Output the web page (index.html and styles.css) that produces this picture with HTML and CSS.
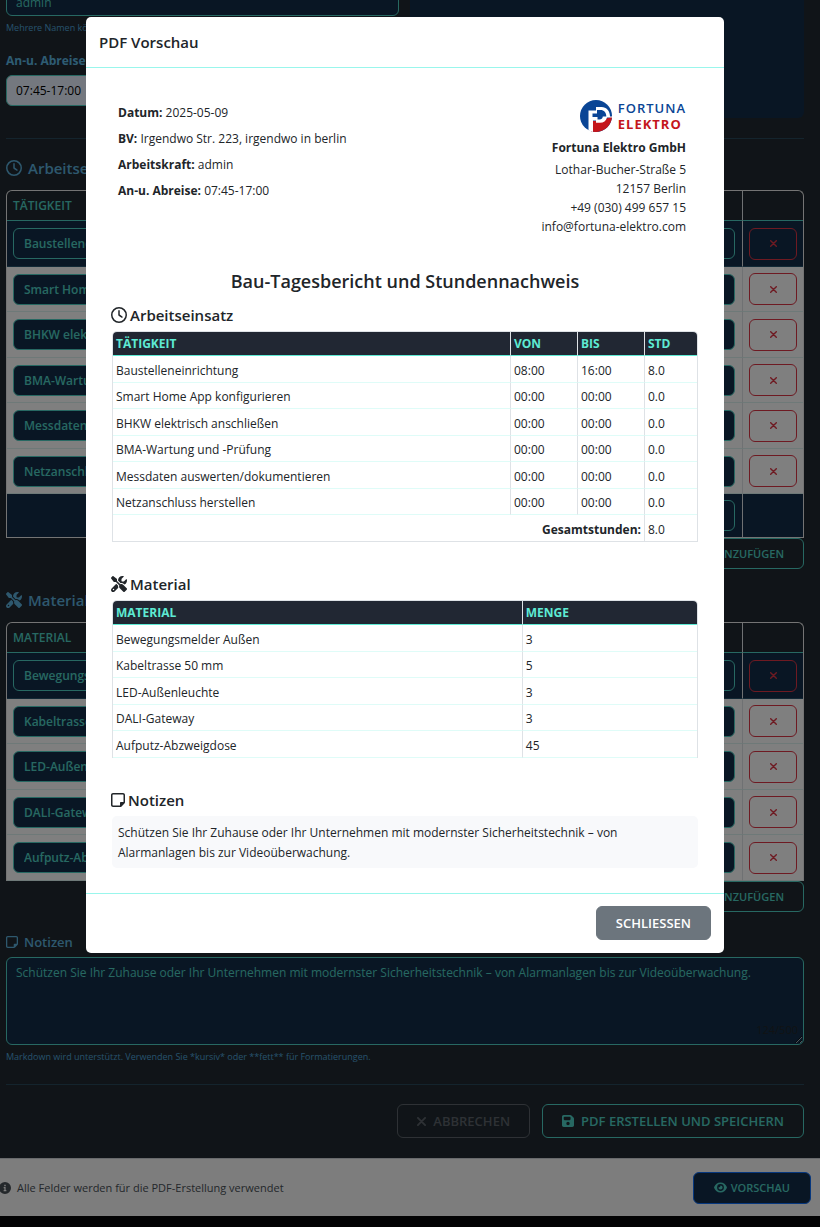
FILE: index.html
```html
<!DOCTYPE html>
<html lang="de">
<head>
<meta charset="utf-8">
<meta name="viewport" content="width=device-width, initial-scale=1">
<title>Bau-Tagesbericht</title>
<link rel="stylesheet" href="styles.css">
</head>
<body>
<svg class="sprite" aria-hidden="true">
  <symbol id="clock" viewBox="0 0 512 512"><path d="M464 256A208 208 0 1 1 48 256a208 208 0 1 1 416 0zM0 256a256 256 0 1 0 512 0A256 256 0 1 0 0 256zM232 120V256c0 8 4 15.5 10.7 20l96 64c11 7.4 25.9 4.4 33.3-6.7s4.4-25.9-6.7-33.3L280 243.2V120c0-13.3-10.7-24-24-24s-24 10.7-24 24z"/></symbol>
  <symbol id="tools" viewBox="0 0 512 512"><path d="M78.6 5C69.1-2.4 55.6-1.5 47 7L7 47c-8.5 8.5-9.4 22-2.1 31.6l80 104c4.5 5.9 11.6 9.4 19 9.4h54.1l109 109c-14.7 29-10 65.4 14.3 89.6l112 112c12.5 12.5 32.8 12.5 45.3 0l64-64c12.5-12.5 12.5-32.8 0-45.3l-112-112c-24.2-24.2-60.6-29-89.6-14.3l-109-109V104c0-7.5-3.5-14.5-9.4-19L78.6 5zM19.9 396.1C7.2 408.8 0 426.1 0 444.1C0 481.6 30.4 512 67.9 512c18 0 35.3-7.2 48-19.9L233.7 374.3c-7.8-20.9-9-43.6-3.6-65.1l-61.7-61.7L19.9 396.1zM512 144c0-10.5-1.1-20.7-3.2-30.5c-2.4-11.2-16.1-14.1-24.2-6l-63.9 63.9c-3 3-7.1 4.7-11.3 4.7H352c-8.8 0-16-7.2-16-16V102.6c0-4.2 1.7-8.3 4.7-11.3l63.9-63.9c8.1-8.1 5.2-21.8-6-24.2C388.7 1.1 378.5 0 368 0C288.5 0 224 64.5 224 144l0 .8 85.3 85.3c36-9.1 75.8 .5 104 28.7L429 274.5c49-23 83-72.8 83-130.5zM56 432a24 24 0 1 1 48 0 24 24 0 1 1 -48 0z"/></symbol>
  <symbol id="note" viewBox="0 32 448 448"><path d="M64 80c-8.8 0-16 7.2-16 16V416c0 8.8 7.2 16 16 16H288V352c0-17.7 14.3-32 32-32h80V96c0-8.8-7.2-16-16-16H64zM288 480H64c-35.3 0-64-28.7-64-64V96C0 60.7 28.7 32 64 32H384c35.3 0 64 28.7 64 64V320v5.5c0 17-6.7 33.3-18.7 45.3l-90.5 90.5c-12 12-28.3 18.7-45.3 18.7H288z"/></symbol>
  <symbol id="save" viewBox="0 32 448 448"><path d="M64 32C28.7 32 0 60.7 0 96V416c0 35.3 28.7 64 64 64H384c35.3 0 64-28.7 64-64V173.3c0-17-6.7-33.3-18.7-45.3L352 50.7C340 38.7 323.7 32 306.7 32H64zm0 96c0-17.7 14.3-32 32-32H288c17.7 0 32 14.3 32 32v64c0 17.7-14.3 32-32 32H96c-17.7 0-32-14.3-32-32V128zM224 288a64 64 0 1 1 0 128 64 64 0 1 1 0-128z"/></symbol>
  <symbol id="cross" viewBox="0 0 10 10"><path d="M1 1l8 8M9 1l-8 8" fill="none" stroke="currentColor" stroke-width="2" stroke-linecap="round"/></symbol>
  <symbol id="eye" viewBox="0 0 26 22"><path fill-rule="evenodd" d="M13 1C7 1 2.500 5 .3 10.200q-.3.800 0 1.600C2.500 17 7 21 13 21s10.500-4 12.700-9.200q.3-.8 0-1.600C23.500 5 19 1 13 1zM13 4.200a6.800 6.800 0 1 1 0 13.600a6.800 6.800 0 1 1 0-13.600zM13 6.800q.4 4-4.200 4.200a4.200 4.200 0 1 0 4.200-4.200z"/></symbol>
  <symbol id="info" viewBox="0 0 16 16"><path fill-rule="evenodd" d="M8 0a8 8 0 1 1 0 16A8 8 0 1 1 8 0zM7 3.500v2h2v-2zM6.200 6.800v1.400h1v2.600h-1v1.400h3.600v-1.400h-1v-4z"/></symbol>
</svg>

<main class="page">
  <form class="report">
    <div class="top">
      <div class="top-fields">
        <textarea class="field staff" aria-label="Arbeitskraft">admin</textarea>
        <p class="hint">Mehrere Namen können durch Komma getrennt werden.</p>
        <label class="field-label" for="travel">An-u. Abreise</label>
        <input class="field field-light" id="travel" value="07:45-17:00">
      </div>
      <div class="panel"></div>
    </div>
    <hr class="rule">

    <h2 class="section"><svg class="icon"><use href="#clock"/></svg>Arbeitseinsatz</h2>
    <table class="edit">
      <colgroup><col><col class="w-time"><col class="w-time"><col class="w-hours"><col class="w-del"></colgroup>
      <thead><tr><th>TÄTIGKEIT</th><th>VON</th><th>BIS</th><th>STD</th><th></th></tr></thead>
      <tbody>
        <tr class="active"><td><input aria-label="Tätigkeit" value="Baustelleneinrichtung"></td><td><input aria-label="Von" value="08:00"></td><td><input aria-label="Bis" value="16:00"></td><td><input aria-label="Std" value="8.0"></td><td><button type="button" class="del" aria-label="Entfernen"><svg><use href="#cross"/></svg></button></td></tr>
        <tr><td><input aria-label="Tätigkeit" value="Smart Home App konfigurieren"></td><td><input aria-label="Von" value="00:00"></td><td><input aria-label="Bis" value="00:00"></td><td><input aria-label="Std" value="0.0"></td><td><button type="button" class="del" aria-label="Entfernen"><svg><use href="#cross"/></svg></button></td></tr>
        <tr><td><input aria-label="Tätigkeit" value="BHKW elektrisch anschließen"></td><td><input aria-label="Von" value="00:00"></td><td><input aria-label="Bis" value="00:00"></td><td><input aria-label="Std" value="0.0"></td><td><button type="button" class="del" aria-label="Entfernen"><svg><use href="#cross"/></svg></button></td></tr>
        <tr><td><input aria-label="Tätigkeit" value="BMA-Wartung und -Prüfung"></td><td><input aria-label="Von" value="00:00"></td><td><input aria-label="Bis" value="00:00"></td><td><input aria-label="Std" value="0.0"></td><td><button type="button" class="del" aria-label="Entfernen"><svg><use href="#cross"/></svg></button></td></tr>
        <tr><td><input aria-label="Tätigkeit" value="Messdaten auswerten/dokumentieren"></td><td><input aria-label="Von" value="00:00"></td><td><input aria-label="Bis" value="00:00"></td><td><input aria-label="Std" value="0.0"></td><td><button type="button" class="del" aria-label="Entfernen"><svg><use href="#cross"/></svg></button></td></tr>
        <tr><td><input aria-label="Tätigkeit" value="Netzanschluss herstellen"></td><td><input aria-label="Von" value="00:00"></td><td><input aria-label="Bis" value="00:00"></td><td><input aria-label="Std" value="0.0"></td><td><button type="button" class="del" aria-label="Entfernen"><svg><use href="#cross"/></svg></button></td></tr>
      </tbody>
      <tfoot><tr class="active"><td colspan="3"></td><td><input aria-label="Gesamtstunden" value="8.0"></td><td></td></tr></tfoot>
    </table>
    <div class="add-row"><button type="button" class="btn btn-add">TÄTIGKEIT HINZUFÜGEN</button></div>

    <h2 class="section"><svg class="icon"><use href="#tools"/></svg>Material</h2>
    <table class="edit">
      <colgroup><col><col class="w-amount"><col class="w-del"></colgroup>
      <thead><tr><th>MATERIAL</th><th>MENGE</th><th></th></tr></thead>
      <tbody>
        <tr class="active"><td><input aria-label="Material" value="Bewegungsmelder Außen"></td><td><input aria-label="Menge" value="3"></td><td><button type="button" class="del" aria-label="Entfernen"><svg><use href="#cross"/></svg></button></td></tr>
        <tr><td><input aria-label="Material" value="Kabeltrasse 50 mm"></td><td><input aria-label="Menge" value="5"></td><td><button type="button" class="del" aria-label="Entfernen"><svg><use href="#cross"/></svg></button></td></tr>
        <tr><td><input aria-label="Material" value="LED-Außenleuchte"></td><td><input aria-label="Menge" value="3"></td><td><button type="button" class="del" aria-label="Entfernen"><svg><use href="#cross"/></svg></button></td></tr>
        <tr><td><input aria-label="Material" value="DALI-Gateway"></td><td><input aria-label="Menge" value="3"></td><td><button type="button" class="del" aria-label="Entfernen"><svg><use href="#cross"/></svg></button></td></tr>
        <tr><td><input aria-label="Material" value="Aufputz-Abzweigdose"></td><td><input aria-label="Menge" value="45"></td><td><button type="button" class="del" aria-label="Entfernen"><svg><use href="#cross"/></svg></button></td></tr>
      </tbody>
    </table>
    <div class="add-row"><button type="button" class="btn btn-add">MATERIAL HINZUFÜGEN</button></div>

    <label class="notes-label" for="notes"><svg class="icon-sm"><use href="#note"/></svg>Notizen</label>
    <div class="notes-wrap">
      <textarea class="field notes" id="notes">Schützen Sie Ihr Zuhause oder Ihr Unternehmen mit modernster Sicherheitstechnik – von Alarmanlagen bis zur Videoüberwachung.</textarea>
      <span class="counter">124/500</span>
    </div>
    <p class="hint">Markdown wird unterstützt. Verwenden Sie *kursiv* oder **fett** für Formatierungen.</p>
    <hr class="rule rule-end">
    <div class="actions">
      <button type="button" class="btn btn-cancel"><svg class="icon-x"><use href="#cross"/></svg>ABBRECHEN</button>
      <button type="button" class="btn"><svg class="icon-sm"><use href="#save"/></svg>PDF ERSTELLEN UND SPEICHERN</button>
    </div>
  </form>
  <footer class="bar">
    <span class="bar-note"><svg class="icon-info"><use href="#info"/></svg>Alle Felder werden für die PDF-Erstellung verwendet</span>
    <button type="button" class="btn btn-preview"><svg class="icon-eye"><use href="#eye"/></svg>VORSCHAU</button>
  </footer>
</main>

<div class="backdrop">
  <section class="modal" role="dialog" aria-labelledby="modal-title">
    <header class="modal-head"><h2 id="modal-title">PDF Vorschau</h2></header>
    <div class="modal-body">
      <div class="intro">
        <div class="facts">
          <p><b>Datum:</b> 2025-05-09</p>
          <p><b>BV:</b> Irgendwo Str. 223, irgendwo in berlin</p>
          <p><b>Arbeitskraft:</b> admin</p>
          <p><b>An-u. Abreise:</b> 07:45-17:00</p>
        </div>
        <address class="company">
          <div class="logo">
            <svg class="logo-mark" viewBox="0 0 32 32" aria-hidden="true">
              <circle cx="16" cy="16" r="16" fill="#0a4595"/>
              <path fill="#c4161c" d="M11 21h9l12-4.500A16 16 0 0 1 11 31.200z"/>
              <path fill="#fff" d="M8.500 10.500H16V7h5.500c5 0 8.500 4 8.500 9.500h2.500v1H27c-.8 3.500-3.500 5.300-7 5.300h-4v-2.300h-3V32l-4.500-1.500z"/>
              <path fill="#0a4595" d="M12.500 13.500H17V10h3.500c3.500 0 5.800 2.500 5.800 6.500h-3.500c-.3 2.300-1.500 3-3.300 3h-2v-2.500h-5z"/>
            </svg>
            <div class="logo-text"><span>FORTUNA</span><span class="red">ELEKTRO</span></div>
          </div>
          <b>Fortuna Elektro GmbH</b>
          <span>Lothar-Bucher-Straße 5</span>
          <span>12157 Berlin</span>
          <span>+49 (030) 499 657 15</span>
          <span>info@fortuna-elektro.com</span>
        </address>
      </div>
      <h1 class="doc-title">Bau-Tagesbericht und Stundennachweis</h1>

      <h3 class="doc-section"><svg class="icon"><use href="#clock"/></svg>Arbeitseinsatz</h3>
      <table class="doc">
        <colgroup><col><col class="d-time"><col class="d-time"><col class="d-hours"></colgroup>
        <thead><tr><th>TÄTIGKEIT</th><th>VON</th><th>BIS</th><th>STD</th></tr></thead>
        <tbody>
          <tr><td>Baustelleneinrichtung</td><td>08:00</td><td>16:00</td><td>8.0</td></tr>
          <tr><td>Smart Home App konfigurieren</td><td>00:00</td><td>00:00</td><td>0.0</td></tr>
          <tr><td>BHKW elektrisch anschließen</td><td>00:00</td><td>00:00</td><td>0.0</td></tr>
          <tr><td>BMA-Wartung und -Prüfung</td><td>00:00</td><td>00:00</td><td>0.0</td></tr>
          <tr><td>Messdaten auswerten/dokumentieren</td><td>00:00</td><td>00:00</td><td>0.0</td></tr>
          <tr><td>Netzanschluss herstellen</td><td>00:00</td><td>00:00</td><td>0.0</td></tr>
        </tbody>
        <tfoot><tr><td colspan="3"><b>Gesamtstunden:</b></td><td>8.0</td></tr></tfoot>
      </table>

      <h3 class="doc-section"><svg class="icon"><use href="#tools"/></svg>Material</h3>
      <table class="doc">
        <colgroup><col class="d-material"><col></colgroup>
        <thead><tr><th>MATERIAL</th><th>MENGE</th></tr></thead>
        <tbody>
          <tr><td>Bewegungsmelder Außen</td><td>3</td></tr>
          <tr><td>Kabeltrasse 50 mm</td><td>5</td></tr>
          <tr><td>LED-Außenleuchte</td><td>3</td></tr>
          <tr><td>DALI-Gateway</td><td>3</td></tr>
          <tr><td>Aufputz-Abzweigdose</td><td>45</td></tr>
        </tbody>
      </table>

      <h3 class="doc-section"><svg class="icon-note"><use href="#note"/></svg>Notizen</h3>
      <p class="doc-notes">Schützen Sie Ihr Zuhause oder Ihr Unternehmen mit modernster Sicherheitstechnik – von Alarmanlagen bis zur Videoüberwachung.</p>
    </div>
    <footer class="modal-foot"><button type="button" class="btn btn-close">SCHLIESSEN</button></footer>
  </section>
</div>
</body>
</html>
```
FILE: styles.css
```css
* { box-sizing: border-box; }

body {
  margin: 0;
  overflow: hidden;
  background: #060608;
  color: #212529;
  font: 12px/20px "Open Sans", "Noto Sans", sans-serif;
}

h1, h2, h3, p { margin: 0; }
svg { fill: currentColor; flex: none; }
.sprite { display: none; }
input, textarea, button { font: inherit; }

.icon { width: 16px; height: 16px; }
.icon-sm { width: 12px; height: 12px; }
.icon-note { width: 14px; height: 14px; }
.icon-x { width: 9px; height: 9px; }
.icon-eye { width: 13px; height: 11px; }
.icon-info { width: 12px; height: 12px; }

/* Form page, scrolled so that its first field is cut by the window edge */
.page { margin-top: -24px; }
.report {
  padding: 0 16px 20px 6px;
  background: #202930;
}
.top { display: grid; grid-template-columns: 393fr 394fr; gap: 11px; }
.panel { border-radius: 0 0 6px 6px; background: #132d48; }
.top-fields { padding-bottom: 12px; }

.field {
  display: block;
  width: 100%;
  padding: 5px 9px;
  border: 1px solid #4fd1c5;
  border-radius: 6px;
  background: #132d48;
  color: #4fd1c5;
}
.staff { height: 40px; padding-top: 16px; resize: none; overflow: hidden; }
.field-light { height: 31px; background: #e8f0fe; color: #000; }
.field-label { display: block; margin: 14px 0 4px; color: #5cb8e4; font-weight: 700; }
.hint { margin-top: 3px; color: #4fa3d8; font-size: 9px; line-height: 18px; }
.rule { height: 1px; margin: 20px 0 18px; border: 0; background: #28485a; }
.rule-end { margin: 18px 0 19px; }

.section {
  display: flex;
  align-items: center;
  gap: 6px;
  margin-bottom: 12px;
  padding-top: 1px;
  color: #5cb0dc;
  font-size: 15px;
  font-weight: 600;
  line-height: 20px;
}

.edit {
  width: 100%;
  border-collapse: separate;
  border-spacing: 0;
  border: 1px solid #e8e8e8;
  border-bottom-width: 0;
  border-radius: 6px 6px 0 0;
  table-layout: fixed;
}
.edit th {
  height: 30px;
  padding: 0 6px;
  border-bottom: 1px solid #4fd1c5;
  color: #4fd1c5;
  font-weight: 600;
  text-align: left;
}
.edit td {
  height: 45px;
  padding: 0 7px 0 6px;
  border-bottom: 1px solid #dcf2f0;
  background: #fff;
}
.edit tbody tr:nth-child(odd) td { height: 46px; }
.edit .active td { border-bottom-color: #24506a; background: #132d48; }
.edit tfoot .active td { height: 44px; border-bottom-color: #e8e8e8; }
.edit th + th, .edit td + td { border-left: 1px solid #dee2e6; }
.edit input {
  display: block;
  width: 100%;
  height: 31px;
  padding: 0 10px;
  border: 1px solid #4fd1c5;
  border-radius: 6px;
  background: #132d48;
  color: #4fd1c5;
  font-weight: 600;
}
.w-time { width: 90px; }
.w-hours { width: 80px; }
.w-amount { width: 200px; }
.w-del { width: 61px; }
.del {
  display: grid;
  place-items: center;
  width: 48px;
  height: 32px;
  padding: 0;
  border: 1px solid #dc3545;
  border-radius: 6px;
  background: transparent;
  color: #dc3545;
}
.del svg { width: 7px; height: 7px; }

.btn {
  display: inline-flex;
  align-items: center;
  justify-content: center;
  gap: 7px;
  height: 34px;
  padding: 0 19px;
  border: 1px solid #4fd1c5;
  border-radius: 6px;
  background: transparent;
  color: #4fd1c5;
  font-size: 13px;
  font-weight: 600;
}
.add-row { display: flex; justify-content: flex-end; margin-bottom: 20px; }
.btn-add { height: 31px; font-size: 11px; }

.notes-label {
  display: flex;
  align-items: center;
  gap: 6px;
  margin-bottom: 5px;
  color: #5cb0dc;
  font-size: 13px;
  font-weight: 600;
}
.notes-wrap { position: relative; }
.notes { height: 88px; resize: vertical; }
.counter { position: absolute; right: 6px; bottom: 5px; font-size: 11px; }
.actions { display: flex; justify-content: flex-end; gap: 12px; }
.btn-cancel { border-color: #5c636a; color: #5c636a; }

.bar {
  display: flex;
  align-items: center;
  justify-content: space-between;
  height: 58px;
  padding-right: 9px;
  border-top: 1px solid #d0d4d8;
  background: #fafafa;
}
.bar-note {
  display: flex;
  align-items: center;
  gap: 6px;
  margin-left: -1px;
  color: #495057;
  font-size: 11px;
}
.btn-preview {
  height: 32px;
  gap: 4px;
  padding: 0 20px;
  border-color: #0d6efd;
  background: #132d48;
  font-size: 11px;
}

/* Preview dialog */
.backdrop {
  position: fixed;
  inset: 0;
  display: flex;
  justify-content: center;
  align-items: flex-start;
  padding: 17px 10px 17px 0;
  background: rgba(0, 0, 0, .5);
}
.modal {
  width: 100%;
  max-width: 638px;
  border-radius: 5px;
  background: #fff;
}
.modal-head { padding: 13px; border-bottom: 1px solid #99f6ec; }
.modal-head h2 { font-size: 15px; font-weight: 600; line-height: 24px; }
.modal-body { padding: 26px 26px 25px; }
.intro { display: flex; justify-content: space-between; padding: 6px 12px 33px 6px; }
.facts { padding-top: 3px; }
.facts p { margin-bottom: 6px; }
.company {
  display: flex;
  flex-direction: column;
  align-items: flex-end;
  font-style: normal;
  line-height: 19px;
}
.company > b { margin-bottom: 2px; line-height: 20px; }
.logo { display: flex; gap: 6px; margin-bottom: 6px; }
.logo-mark { width: 32px; height: 32px; }
.logo-text {
  display: flex;
  flex-direction: column;
  color: #0a4595;
  font: 600 13px/16px "Open Sans", sans-serif;
  letter-spacing: 1px;
}
.logo-text .red { color: #c4161c; font-weight: 700; }

.doc-title { margin-bottom: 10px; font-size: 18px; font-weight: 600; line-height: 24px; text-align: center; }
.doc-section {
  display: flex;
  align-items: center;
  gap: 3px;
  margin: 0 0 4px -1px;
  font-size: 15px;
  font-weight: 600;
  line-height: 24px;
}
.doc {
  width: 100%;
  margin-bottom: 30px;
  border: 1px solid #dee2e6;
  border-bottom-width: 0;
  border-collapse: separate;
  border-spacing: 0;
  border-radius: 5px 5px 0 0;
  table-layout: fixed;
}
.doc th {
  height: 24px;
  padding: 0 3px;
  border-bottom: 1px solid #5eead4;
  background: #212733;
  color: #5eead4;
  font-weight: 700;
  text-align: left;
}
.doc th:first-child { border-top-left-radius: 4px; }
.doc th:last-child { border-top-right-radius: 4px; }
.doc td { height: 26px; padding: 3px 3px 0; border-bottom: 1px solid #dffcf8; }
.doc tbody tr:nth-child(odd) td, .doc tfoot td { height: 27px; }
.doc th + th, .doc td + td { border-left: 1px solid #dee2e6; }
.doc tfoot td { border-bottom-color: #dee2e6; }
.doc tfoot td:first-child { text-align: right; }
.d-time { width: 67px; }
.d-hours { width: 53px; }
.d-material { width: 70%; }

.doc-notes { padding: 7px 6px 5px; border-radius: 5px; background: #f8f9fb; }
.modal-foot {
  display: flex;
  justify-content: flex-end;
  padding: 12px 13px 13px;
  border-top: 1px solid #99f6ec;
}
.btn-close { border-color: #6c757d; background: #6c757d; color: #fff; }
```
